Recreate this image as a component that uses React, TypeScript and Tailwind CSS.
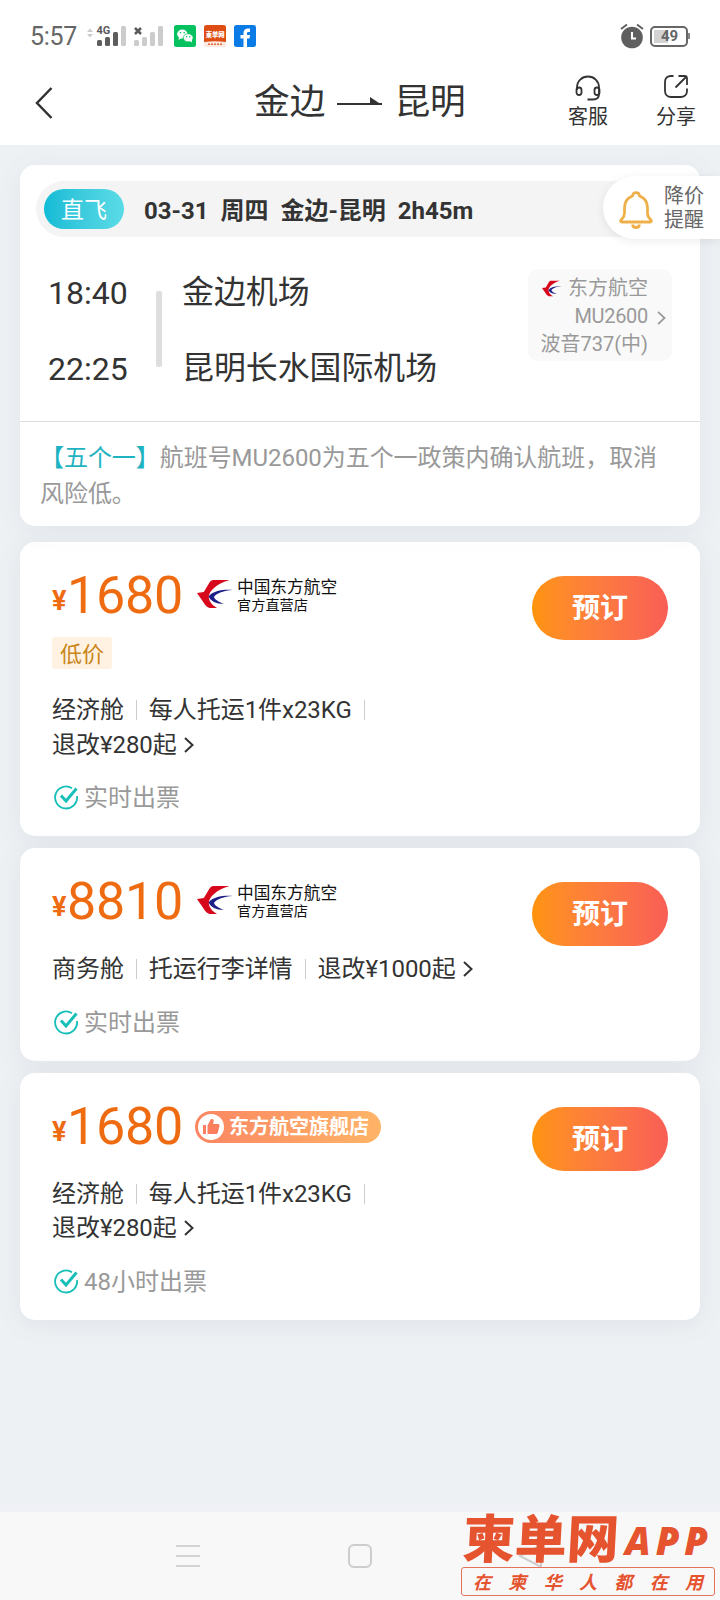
import type { ReactNode } from 'react';

interface Fare {
  id: number;
  price: string;
  store: 'official' | 'flagship';
  tag?: string;
  details: string[];
  refund: string;
  ticketing: string;
}

const fares: Fare[] = [
  {
    id: 1,
    price: '1680',
    store: 'official',
    tag: '低价',
    details: ['经济舱', '每人托运1件x23KG'],
    refund: '退改¥280起',
    ticketing: '实时出票',
  },
  {
    id: 2,
    price: '8810',
    store: 'official',
    details: ['商务舱', '托运行李详情'],
    refund: '退改¥1000起',
    ticketing: '实时出票',
  },
  {
    id: 3,
    price: '1680',
    store: 'flagship',
    details: ['经济舱', '每人托运1件x23KG'],
    refund: '退改¥280起',
    ticketing: '48小时出票',
  },
];

const slogan = ['在', '柬', '华', '人', '都', '在', '用'];

function AirlineLogo({ className }: { className: string }) {
  return (
    <svg viewBox="0 0 36 30" className={className}>
      <path d="M32.500 1H16.500C14.500 1 13.500 2 12.500 3.500L6.800 13L0 14C2 17 4 19.500 6.500 23.500C9 27.500 11 29 14 29H20C16 26.500 12.500 23.500 11.800 18.500C11.500 12 20 4.500 32.500 1Z" fill="#d7081c" />
      <path d="M35.500 11C26 10.300 16 12 11.500 17.500C13.500 22 19 25 27 25C21.500 22.800 17.500 20.500 17 18C19.500 14 27 11.800 35.500 11Z" fill="#1d2088" />
    </svg>
  );
}

function Chevron({ className }: { className: string }) {
  return (
    <svg viewBox="0 0 10 16" className={className} fill="none" stroke="currentColor" strokeWidth="2">
      <path d="M1 1L8.500 8L1 15" />
    </svg>
  );
}

function StatusBar() {
  return (
    <div className="flex h-[72px] items-center pl-[30px] pr-[30px]">
      <span className="mt-0.5 w-[57px] text-[25px] leading-[30px] tracking-[-0.3px] text-[#666]">5:57</span>
      <svg viewBox="0 0 76 24" className="h-6 w-[76px]">
        <path d="M0 8L3 4.500L6 8ZM0 10L3 13.500L6 10Z" fill="#ccc" />
        <text x="9.500" y="10" fontSize="11" fontWeight="700" fill="#5a5a5a">4G</text>
        <g fill="#5d5d5d">
          <rect x="10" y="16" width="5" height="6" rx="1.500" />
          <rect x="18" y="13" width="5" height="9" rx="1.500" />
          <rect x="26" y="8" width="5" height="14" rx="1.500" />
        </g>
        <rect x="34" y="2" width="5" height="20" rx="1.500" fill="#ccc" />
        <path d="M48 4L54 10M54 4L48 10" stroke="#5a5a5a" strokeWidth="2.500" />
        <g fill="#ccc">
          <rect x="47" y="16" width="5" height="6" rx="1.500" />
          <rect x="55" y="13" width="5" height="9" rx="1.500" />
          <rect x="63" y="8" width="5" height="14" rx="1.500" />
          <rect x="71" y="2" width="5" height="20" rx="1.500" />
        </g>
      </svg>
      <div className="ml-[11px] flex gap-2">
        <svg viewBox="0 0 22 22" className="size-[22px]">
          <rect width="22" height="22" rx="2.500" fill="#06c160" />
          <ellipse cx="8.300" cy="9" rx="5.200" ry="4.400" fill="#fff" />
          <path d="M5 12L4.500 15L8 13Z" fill="#fff" />
          <ellipse cx="14.200" cy="12.800" rx="4.900" ry="4" fill="#fff" stroke="#06c160" strokeWidth="0.700" />
          <path d="M16 16L18 17.500L18 14.500Z" fill="#fff" />
          <g fill="#06c160">
            <circle cx="6.500" cy="7.800" r="0.800" />
            <circle cx="10.200" cy="7.800" r="0.800" />
            <circle cx="12.600" cy="11.800" r="0.700" />
            <circle cx="15.800" cy="11.800" r="0.700" />
          </g>
        </svg>
        <svg viewBox="0 0 22 22" className="size-[22px]">
          <rect width="22" height="22" rx="2.500" fill="#fbe9df" />
          <path d="M0 17V2.500Q0 0 2.500 0H19.500Q22 0 22 2.500V17Q11 15.500 0 17Z" fill="#dd4d14" />
          <text x="1.700" y="12" fontSize="6.300" fontWeight="900" fill="#fff">柬单网</text>
          <path d="M4 19.200H18" stroke="#dd6a3c" strokeWidth="1.500" strokeDasharray="2 1" />
        </svg>
        <svg viewBox="0 0 22 22" className="size-[22px]">
          <rect width="22" height="22" rx="2.500" fill="#0b7be5" />
          <path d="M9.500 22V13.500H6.500V10H9.500V8C9.500 5 11.200 3.500 14 3.500H16V7H14.500C13.400 7 13 7.500 13 8.500V10H16L15.500 13.500H13V22Z" fill="#fff" />
        </svg>
      </div>
      <svg viewBox="0 0 24 26" className="ml-auto h-[26px] w-6 text-[#5f5f5f]">
        <circle cx="12" cy="14.500" r="10.800" fill="currentColor" />
        <path d="M1 6L7 1.500M23 6L17 1.500" stroke="currentColor" strokeWidth="2" />
        <path d="M12 9V15.500H16" fill="none" stroke="#fff" strokeWidth="2" />
      </svg>
      <div className="ml-1.5 flex h-[21px] w-[38px] items-center rounded-[5px] border-2 border-[#666] p-0.5">
        <div className="flex h-full w-[14px] items-center bg-[#d3d3d3]">
          <span className="pl-[7px] text-[15px] font-bold leading-none text-[#666]">49</span>
        </div>
      </div>
      <span className="h-1.5 w-0.5 bg-[#888]" />
    </div>
  );
}

function HeaderAction({ label, children }: { label: string; children: ReactNode }) {
  return (
    <button className="-mt-0.5 flex w-10 flex-col items-center gap-[3px]">
      {children}
      <span className="text-[20px] leading-[26px]">{label}</span>
    </button>
  );
}

function Header() {
  return (
    <header className="h-[145px] bg-white text-[#333]">
      <StatusBar />
      <div className="flex h-[62px] items-center">
        <svg viewBox="0 0 18 32" className="ml-[35px] h-8 w-[18px]" fill="none" stroke="currentColor" strokeWidth="2.500">
          <path d="M16.500 1L2 16L16.500 31" />
        </svg>
        <h1 className="ml-[201px] mt-[-2px] flex items-center text-[35.700px] leading-[44px]">
          金边
          <svg viewBox="0 0 46 8" className="ml-3 mr-[11px] mt-[-2px] h-2 w-[46px]">
            <path d="M0 7H45" stroke="#333" strokeWidth="2" />
            <path d="M33 0L45 8H33Z" fill="#333" />
          </svg>
          昆明
        </h1>
        <div className="ml-auto mr-6 flex gap-12">
          <HeaderAction label="客服">
            <svg viewBox="0 0 26 26" className="size-[26px]" fill="none" stroke="currentColor" strokeWidth="1.800">
              <path d="M2 15V12.500C2 6 7 1.500 13 1.500C19 1.500 24 6 24 12.500V19C24 22.500 21.500 24.500 18 24.500H12.500" />
              <rect x="1.500" y="12.500" width="5" height="7.500" rx="2.500" />
              <rect x="19.500" y="12.500" width="5" height="7.500" rx="2.500" />
            </svg>
          </HeaderAction>
          <HeaderAction label="分享">
            <svg viewBox="0 0 26 26" className="-mt-px mb-px size-[26px]" fill="none" stroke="currentColor" strokeWidth="1.800">
              <path d="M10.500 2H8C4.500 2 2 4 2 8V17C2 20.500 4.500 23 8 23H17.500C21.500 23 24 20.500 24 17V14.500" />
              <path d="M12.500 13.500L23.500 2.500M15.500 2H21.500Q24 2 24 4.500V11" />
            </svg>
          </HeaderAction>
        </div>
      </div>
    </header>
  );
}

function FlightCard() {
  return (
    <section className="relative h-[361px] rounded-[15px] bg-white shadow-[0_4px_24px_rgba(120,120,140,0.08)]">
      <div className="px-4 pt-4">
        <div className="flex h-14 items-center rounded-full bg-[#f4f4f4] pl-2">
          <span className="flex h-10 w-20 items-center justify-center rounded-full bg-linear-to-r from-[#0fbcd6] to-[#5adbe6] pt-1 text-[23px] text-white">直飞</span>
          <span className="ml-5 mt-[3px] whitespace-pre text-[24px] font-bold text-[#333]">03-31  周四  金边-昆明  2h45m</span>
        </div>
      </div>
      <div className="flex pl-7 pt-[37px]">
        <div className="flex w-[88px] flex-col gap-[38px] text-[32px] leading-[38px] text-[#333]">
          <span>18:40</span>
          <span>22:25</span>
        </div>
        <div className="ml-5 mt-[17px] h-[76px] w-1.5 rounded-[2px] bg-[#dedede]" />
        <div className="ml-5 mt-[-1px] flex flex-col gap-[38px] text-[31.900px] leading-[38px] text-[#333]">
          <span>金边机场</span>
          <span>昆明长水国际机场</span>
        </div>
        <div className="ml-auto mr-7 mt-[-5px] flex h-[92px] w-[144px] items-center justify-end gap-[9px] rounded-[10px] bg-[#f9f9f9] pr-1.5 text-[#999]">
          <div className="mt-0.5 flex flex-col items-end text-[20px] leading-[28px]">
            <span className="flex items-center gap-1.5">
              <AirlineLogo className="h-[17px] w-[20px]" />
              东方航空
            </span>
            <span className="tracking-[-0.3px]">MU2600</span>
            <span>波音737(中)</span>
          </div>
          <Chevron className="mt-1.5 h-3.5 w-[9px]" />
        </div>
      </div>
      <div className="absolute inset-x-0 top-[256px] border-t border-[#ddd] pl-5 pt-[18px] text-[24px] leading-[36px] tracking-[-0.05px] text-[#999]">
        <div className="flex">
          <span className="text-[#1fb3c2]">【五个一】</span>
          <span>航班号MU2600为五个一政策内确认航班，取消</span>
        </div>
        <p>风险低。</p>
      </div>
      <div className="absolute -right-5 top-[11px] flex h-[63px] w-[117px] items-center rounded-l-full bg-white pl-4 shadow-[0_2px_10px_rgba(0,0,0,0.08)]">
        <svg viewBox="0 0 34 38" className="mt-1 h-[38px] w-[34px]" fill="none" stroke="#efb04a" strokeWidth="2.800" strokeLinejoin="round">
          <path d="M13.500 5C13.500 0.500 20.500 0.500 20.500 5C26 7 28.500 11 28.500 17V22C28.500 25 29.500 26.500 31.500 28.500C33 30 32.500 31 31 31H3C1.500 31 1 30 2.500 28.500C4.500 26.500 5.500 25 5.500 22V17C5.500 11 8 7 13.500 5Z" />
          <path d="M13.500 33.500C14 37.500 20 37.500 20.500 33.500" />
        </svg>
        <span className="ml-[11px] w-10 text-[20px] leading-[24px] text-[#666]">降价提醒</span>
      </div>
    </section>
  );
}

function StoreBadge({ store }: { store: Fare['store'] }) {
  if (store === 'flagship') {
    return (
      <div className="mt-[38px] flex h-8 w-[186px] items-center rounded-full bg-linear-to-r from-[#fb8562] to-[#ffb467] pl-[3px] text-white">
        <svg viewBox="0 0 26 26" className="size-[26px]">
          <circle cx="13" cy="13" r="13" fill="#fff" />
          <path d="M5 11H8V20H5ZM9.500 11.500L13 5C16 4.500 16.300 7 15 10H20C21.500 10 21.700 11 21.400 12.500L19.800 18.500C19.500 19.600 19 20 18 20H9.500Z" fill="#fb7f5e" />
        </svg>
        <span className="ml-[5px] text-[20px] font-bold leading-8">东方航空旗舰店</span>
      </div>
    );
  }
  return (
    <div className="mt-[37px] flex gap-1 pl-0.5">
      <AirlineLogo className="h-[30px] w-[36px]" />
      <div className="text-[#111]">
        <p className="text-[16.700px] leading-[18px]">中国东方航空</p>
        <p className="text-[14.200px] leading-[17px]">官方直营店</p>
      </div>
    </div>
  );
}

function FareCard({ fare }: { fare: Fare }) {
  return (
    <section className="rounded-[15px] bg-white pl-8 pr-8 shadow-[0_4px_24px_rgba(120,120,140,0.1)]">
      <div className="flex h-[90px] items-start">
        <div className="mt-[23px] flex w-[143px] items-baseline leading-[62px] text-[#ee6b12]">
          <span className="relative -top-[3px] w-[15px] text-[27px] font-bold">¥</span>
          <span className="text-[52px] tracking-[-0.2px]">{fare.price}</span>
        </div>
        <StoreBadge store={fare.store} />
        <button className="ml-auto mt-[34px] h-16 w-[136px] rounded-full bg-linear-to-r from-[#ff9408] to-[#f95e55] pt-0.5 text-[28px] font-bold text-white">预订</button>
      </div>
      {fare.tag && (
        <div className="mb-6 mt-[5px] flex h-8 w-[60px] items-center justify-center rounded-[3px] bg-[#fff2e2] pt-0.5 text-[22px] text-[#c98518]">
          {fare.tag}
        </div>
      )}
      <div className="mt-[14px] flex flex-wrap items-center text-[24px] leading-[34.500px] tracking-[-0.05px] text-[#333]">
        {fare.details.map((item) => (
          <div key={item} className="flex items-center">
            <span>{item}</span>
            <span className="mx-3 h-5 w-px bg-[#ccc]" />
          </div>
        ))}
        <div className={fare.refund.length > 7 ? 'flex items-center' : 'flex w-full items-center'}>
          <span>{fare.refund}</span>
          <Chevron className="ml-[7px] h-4 w-2.5" />
        </div>
      </div>
      <div className="mt-[18px] flex h-14 items-start text-[24px] leading-[36px] text-[#999]">
        <svg viewBox="0 0 26 26" className="ml-px mr-[5px] mt-1 size-[26px]" fill="none" stroke="#18bfb8">
          <path d="M19 4.200A11 11 0 1 0 24 12" strokeWidth="1.800" />
          <path d="M8 11.500L13 17L23.500 4.500" strokeWidth="3" />
        </svg>
        {fare.ticketing}
      </div>
    </section>
  );
}

function BottomNav() {
  return (
    <footer className="relative h-[96px] border-t-8 border-[#f0f0f7] bg-[#f8f8f8]">
      <div className="flex pl-[176px] pt-8 text-[#d2d2d2]">
        <div className="flex h-6 w-6 flex-col justify-between py-px">
          <span className="h-0.5 bg-[#d2d2d2]" />
          <span className="h-0.5 bg-[#d2d2d2]" />
          <span className="h-0.5 bg-[#d2d2d2]" />
        </div>
        <span className="ml-[148px] size-6 rounded-[6px] border-2 border-[#cdcdcd]" />
        <svg viewBox="0 0 26 24" className="ml-[146px] h-6 w-[26px]" fill="none" stroke="#cdcdcd" strokeWidth="2">
          <path d="M2 12L23 1V23Z" />
        </svg>
      </div>
      <div className="absolute bottom-1 right-[5px] w-[254px] text-[#e5532f]">
        <div className="flex h-[53px] items-center pl-0.5">
          <span className="-skew-x-3 text-[52px] font-black leading-[53px]">柬单网</span>
          <span className="ml-1.5 mb-px font-['Open_Sans'] text-[38px] font-extrabold italic leading-none tracking-[5px]">APP</span>
        </div>
        <div className="flex h-[29px] items-center justify-between rounded-[3px] border border-[#e5735a] px-[11px] pt-0.5 text-[18px] font-bold italic">
          {slogan.map((char, i) => (
            <span key={i}>{char}</span>
          ))}
        </div>
      </div>
    </footer>
  );
}

export default function App() {
  return (
    <div className="flex h-[1600px] w-[720px] flex-col overflow-hidden bg-[#edf1f4] font-[Roboto,'Noto_Sans_CJK_SC',sans-serif]">
      <Header />
      <main className="flex flex-1 flex-col px-5 pt-5">
        <FlightCard />
        <div className="mt-4 flex flex-col gap-3">
          {fares.map((fare) => (
            <FareCard key={fare.id} fare={fare} />
          ))}
        </div>
      </main>
      <BottomNav />
    </div>
  );
}
